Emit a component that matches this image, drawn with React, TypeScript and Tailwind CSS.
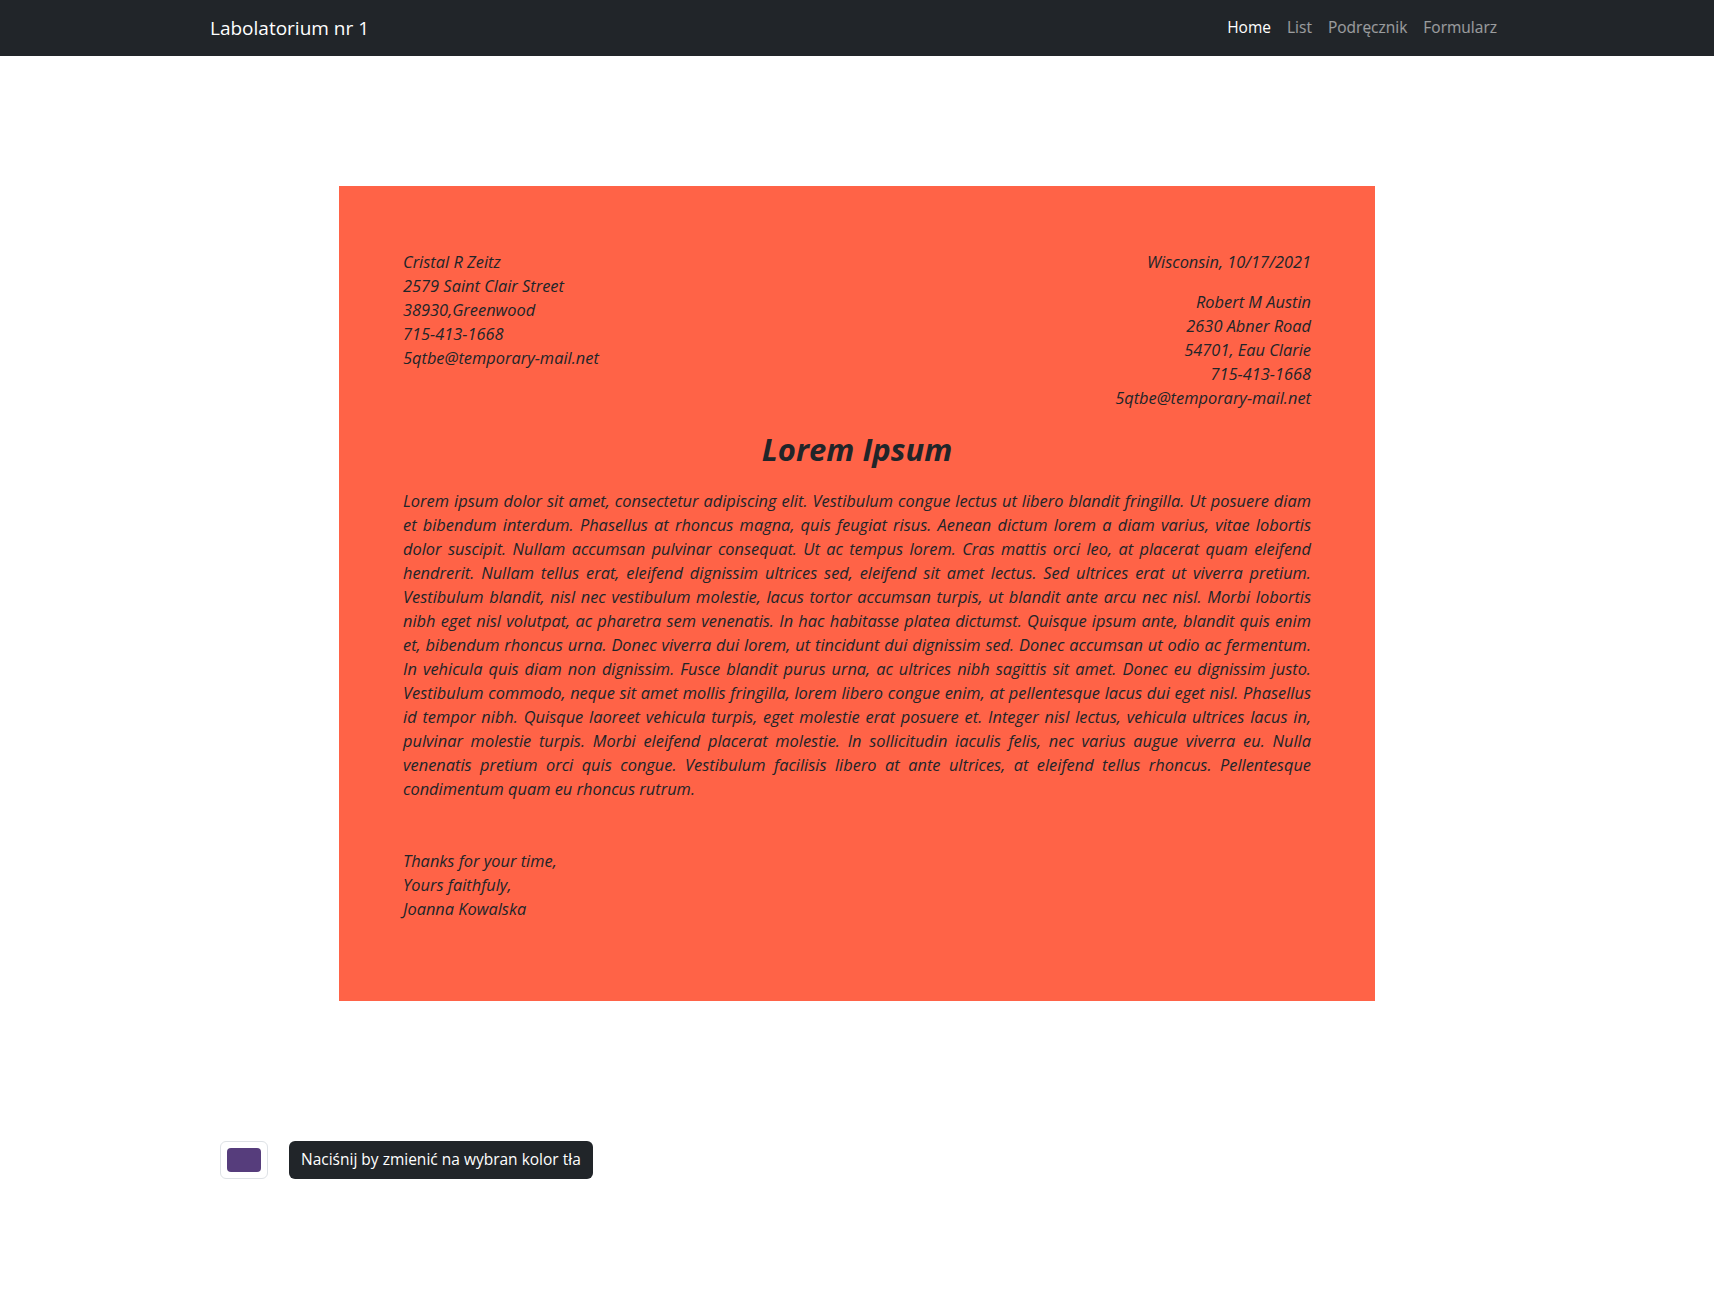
import React, { useState } from 'react';

const navLinks = ['Home', 'List', 'Podręcznik', 'Formularz'];

const sender = [
  'Cristal R Zeitz',
  '2579 Saint Clair Street',
  '38930,Greenwood',
  '715-413-1668',
  '5qtbe@temporary-mail.net',
];

const recipient = [
  'Robert M Austin',
  '2630 Abner Road',
  '54701, Eau Clarie',
  '715-413-1668',
  '5qtbe@temporary-mail.net',
];

const lorem =
  'Lorem ipsum dolor sit amet, consectetur adipiscing elit. Vestibulum congue lectus ut libero blandit fringilla. Ut posuere diam et bibendum interdum. Phasellus at rhoncus magna, quis feugiat risus. Aenean dictum lorem a diam varius, vitae lobortis dolor suscipit. Nullam accumsan pulvinar consequat. Ut ac tempus lorem. Cras mattis orci leo, at placerat quam eleifend hendrerit. Nullam tellus erat, eleifend dignissim ultrices sed, eleifend sit amet lectus. Sed ultrices erat ut viverra pretium. Vestibulum blandit, nisl nec vestibulum molestie, lacus tortor accumsan turpis, ut blandit ante arcu nec nisl. Morbi lobortis nibh eget nisl volutpat, ac pharetra sem venenatis. In hac habitasse platea dictumst. Quisque ipsum ante, blandit quis enim et, bibendum rhoncus urna. Donec viverra dui lorem, ut tincidunt dui dignissim sed. Donec accumsan ut odio ac fermentum. In vehicula quis diam non dignissim. Fusce blandit purus urna, ac ultrices nibh sagittis sit amet. Donec eu dignissim justo. Vestibulum commodo, neque sit amet mollis fringilla, lorem libero congue enim, at pellentesque lacus dui eget nisl. Phasellus id tempor nibh. Quisque laoreet vehicula turpis, eget molestie erat posuere et. Integer nisl lectus, vehicula ultrices lacus in, pulvinar molestie turpis. Morbi eleifend placerat molestie. In sollicitudin iaculis felis, nec varius augue viverra eu. Nulla venenatis pretium orci quis congue. Vestibulum facilisis libero at ante ultrices, at eleifend tellus rhoncus. Pellentesque condimentum quam eu rhoncus rutrum.';

const App = () => {
  const [color] = useState('#563d7c');
  const [bg, setBg] = useState('#ff6347');

  return (
    <div className="min-h-screen bg-white text-[#212529] font-['Open_Sans',sans-serif]">
      <nav className="bg-[#212529]">
        <div className="max-w-[1320px] mx-auto px-3 h-14 flex items-center justify-between">
          <span className="text-white text-[19px] pl-px">Labolatorium nr 1</span>
          <ul className="flex text-[15.5px]">
            {navLinks.map((link, i) => (
              <li key={link}>
                <a
                  href="#"
                  className={i === 0 ? 'block px-2 text-white' : 'block px-2 text-white/55'}
                >
                  {link}
                </a>
              </li>
            ))}
          </ul>
        </div>
      </nav>

      <div
        className="w-[1036px] mx-auto mt-[130px] px-16 pt-16 pb-20 italic text-[16.4px] leading-6"
        style={{ backgroundColor: bg }}
      >
        <div className="flex justify-between">
          <div>
            {sender.map((line) => (
              <div key={line}>{line}</div>
            ))}
          </div>
          <div className="text-right">
            <div className="mb-4">Wisconsin, 10/17/2021</div>
            {recipient.map((line) => (
              <div key={line}>{line}</div>
            ))}
          </div>
        </div>

        <h3 className="text-center font-bold text-[31px] leading-[36px] mt-[21px] mb-[22px]">Lorem Ipsum</h3>

        <p className="text-justify">{lorem}</p>

        <div className="mt-12">
          <div>Thanks for your time,</div>
          <div>Yours faithfuly,</div>
          <div>Joanna Kowalska</div>
        </div>
      </div>

      <div className="max-w-[1320px] mx-auto px-3 mt-[140px] pb-[120px]">
        <div className="flex items-center gap-[21px] pl-[11px]">
          <div className="w-12 h-[38px] border border-[#dee2e6] rounded-md p-1.5 bg-white">
            <div className="w-full h-full rounded" style={{ backgroundColor: color }} />
          </div>
          <button
            type="button"
            onClick={() => setBg(color)}
            className="h-[38px] px-3 rounded-md bg-[#212529] text-white text-[15.5px]"
          >
            Naciśnij by zmienić na wybran kolor tła
          </button>
        </div>
      </div>
    </div>
  );
};

export default App;
